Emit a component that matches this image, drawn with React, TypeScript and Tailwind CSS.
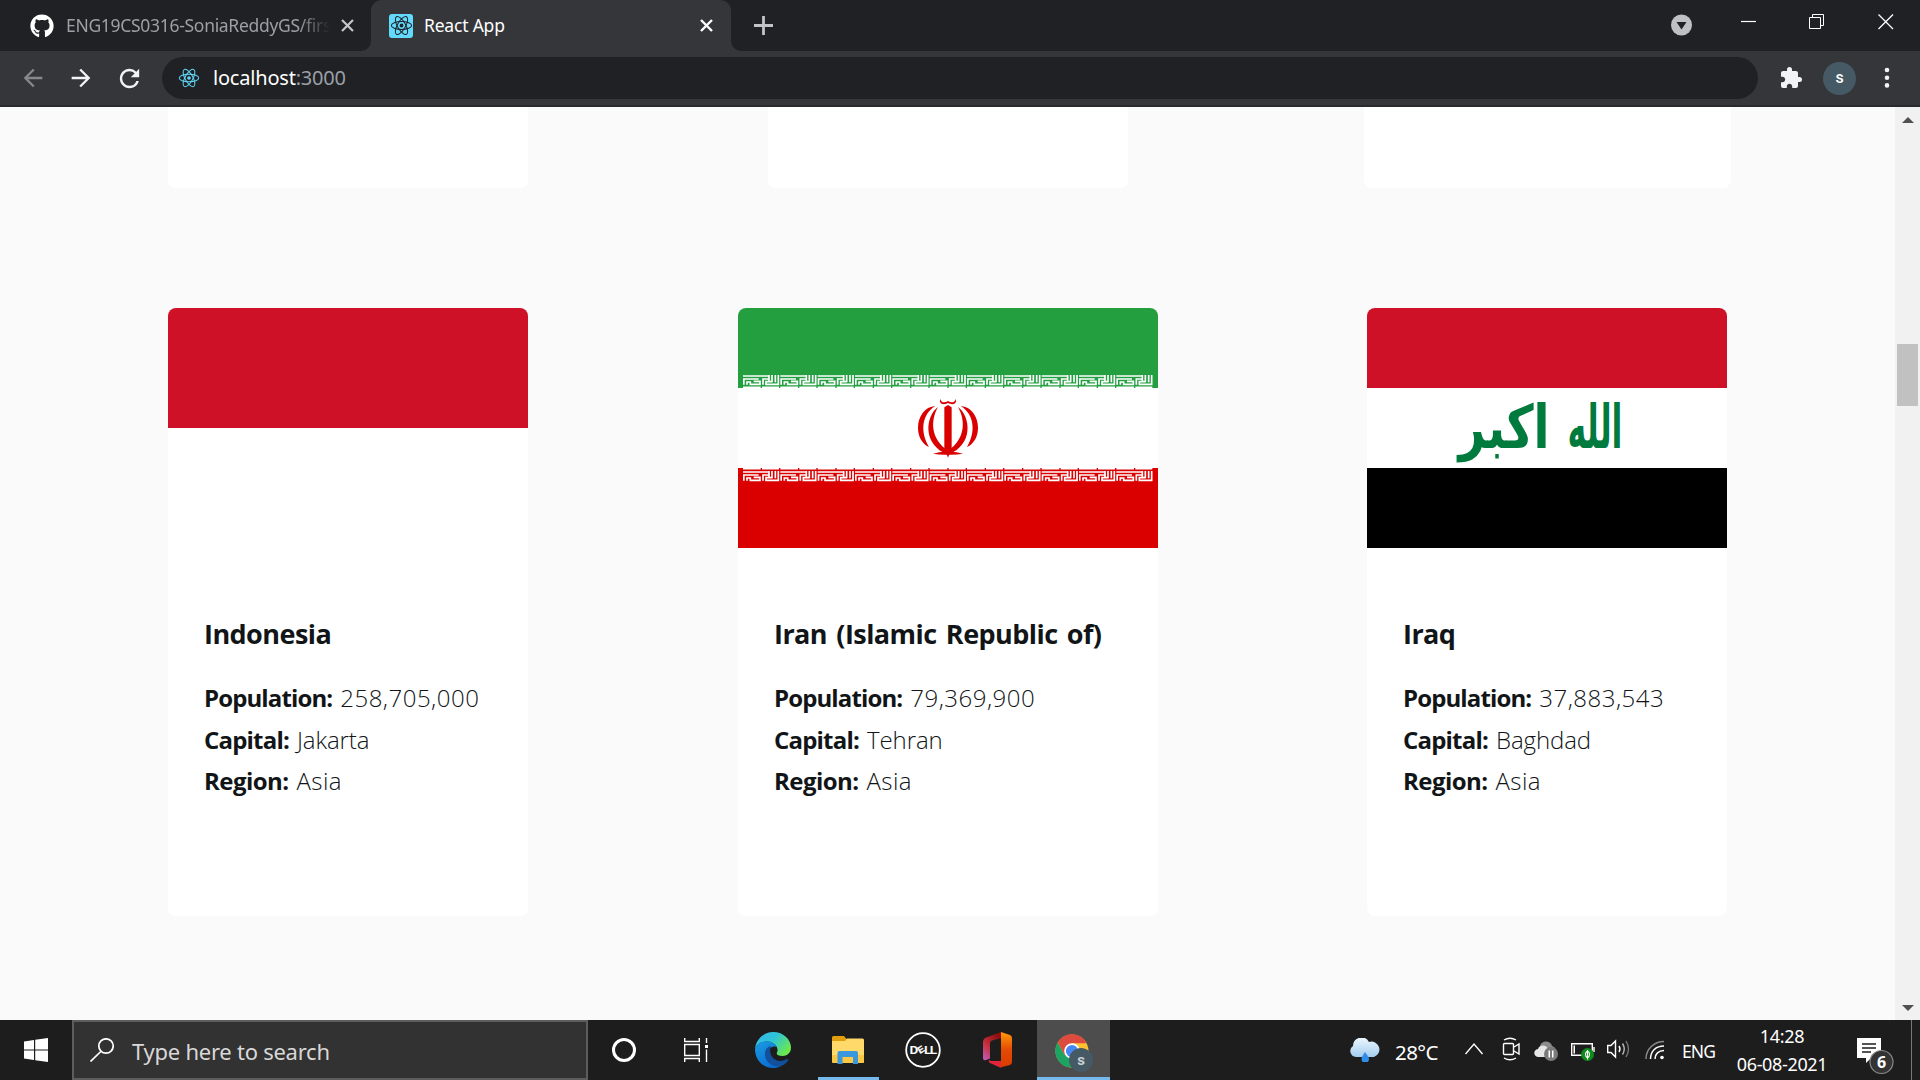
import React from "react";
import { FaGithub } from "react-icons/fa";
import { MdExtension, MdRefresh, MdArrowBack, MdArrowForward } from "react-icons/md";

function ReactLogo({ color, className }: { color: string; className: string }) {
  return (
    <svg viewBox="-12 -12 24 24" className={className} fill="none" stroke={color} strokeWidth="1.1">
      <circle r="2" fill={color} stroke="none" />
      <ellipse rx="10.6" ry="4.2" />
      <ellipse rx="10.6" ry="4.2" transform="rotate(60)" />
      <ellipse rx="10.6" ry="4.2" transform="rotate(120)" />
    </svg>
  );
}

function Cross({ color, size, width }: { color: string; size: number; width: number }) {
  return (
    <svg width={size} height={size} viewBox={`0 0 ${size} ${size}`} stroke={color} strokeWidth={width}>
      <path d={`M1 1L${size - 1} ${size - 1}M${size - 1} 1L1 ${size - 1}`} />
    </svg>
  );
}

function TabStrip() {
  return (
    <div className="flex h-[51px] bg-[#202124]">
      <div className="flex w-[371px] items-center pl-[30px]">
        <FaGithub className="size-6 text-white" />
        <div className="ml-3 w-[264px] whitespace-nowrap text-[17.5px] tracking-[-0.3px] text-[#9aa0a6] [mask-image:linear-gradient(to_right,#000_88%,transparent)]">
          ENG19CS0316-SoniaReddyGS/firs
        </div>
        <div className="ml-[11px]">
          <Cross color="#c4c7ca" size={13} width={2.2} />
        </div>
      </div>
      <div className="relative flex w-[360px] items-center rounded-t-[11px] bg-[#35363a] pl-[18px]">
        <svg className="absolute bottom-0 -left-[10px]" width="10" height="10" fill="#35363a">
          <path d="M10 0V10H0A10 10 0 0 0 10 0Z" />
        </svg>
        <svg className="absolute bottom-0 -right-[10px]" width="10" height="10" fill="#35363a">
          <path d="M0 0V10H10A10 10 0 0 1 0 0Z" />
        </svg>
        <div className="flex size-6 items-center justify-center rounded-[3px] bg-[#61dafb]">
          <ReactLogo color="#20232a" className="size-[23px]" />
        </div>
        <div className="ml-[11px] w-[276px] text-[17.5px] tracking-[-0.2px] text-white">React App</div>
        <Cross color="#fff" size={13} width={2.4} />
      </div>
      <svg className="ml-[23px] mt-4 text-[#c1c4c8]" width="19" height="19" stroke="currentColor" strokeWidth="2.8">
        <path d="M9.5 0V19M0 9.5H19" />
      </svg>
      <div className="ml-auto flex">
        <svg className="mt-[14px]" width="22" height="22">
          <circle cx="10.5" cy="11" r="10.5" fill="#bdc1c6" />
          <path d="M5.500 8H15.500L10.500 15.500Z" fill="#202124" />
        </svg>
        <svg className="ml-[48px] mt-[14px]" width="16" height="16" stroke="#fff" strokeWidth="1.2">
          <path d="M0 7.5H15" />
        </svg>
        <svg className="ml-[52px] mt-[14px]" width="16" height="16" stroke="#fff" strokeWidth="1" fill="none">
          <path d="M.5 3.500H11.500V14.500H.5ZM3.500 3.500V.5H14.500V11.500H11.500" />
        </svg>
        <svg className="ml-[53px] mr-[26px] mt-[14px]" width="16" height="16" stroke="#fff" strokeWidth="1.3">
          <path d="M.5 .5L15 15M15 .5L.5 15" />
        </svg>
      </div>
    </div>
  );
}

function Toolbar() {
  return (
    <div className="flex h-14 items-center border-b-2 border-[#292a2d] bg-[#35363a] pl-[19px]">
      <MdArrowBack className="size-[28px] text-[#86888a]" />
      <MdArrowForward className="ml-5 size-[28px] text-[#f1f3f4]" />
      <MdRefresh className="ml-5 size-[29px] text-[#f1f3f4]" />
      <div className="ml-[18px] flex h-[42px] w-[1596px] items-center rounded-full bg-[#202124] pl-4">
        <ReactLogo color="#61dafb" className="size-[22px]" />
        <div className="ml-[13px] text-[20px] tracking-[-0.2px] text-[#9aa0a6]">
          <span className="text-white">localhost</span>:3000
        </div>
      </div>
      <MdExtension className="ml-[21px] size-6 text-[#f1f3f4]" />
      <div className="ml-5 flex size-[33px] items-center justify-center rounded-full bg-[#455a64] font-['Roboto'] text-[16px] font-medium text-white">
        s
      </div>
      <svg className="ml-[27px]" width="8" height="22" fill="#f1f3f4">
        <circle cx="4" cy="3" r="2.3" />
        <circle cx="4" cy="10.7" r="2.3" />
        <circle cx="4" cy="18.4" r="2.3" />
      </svg>
    </div>
  );
}

function IndonesiaFlag() {
  return (
    <div className="h-60">
      <div className="h-30 bg-[#ce1126]" />
    </div>
  );
}

const tiles = [0, 1, 2, 3, 4, 5, 6, 7, 8, 9, 10];

function KuficBand({ y, edgeY }: { y: number; edgeY: number }) {
  return (
    <g fill="none" stroke="#fff" strokeWidth="5">
      {tiles.map((i) => (
        <g key={i} transform={`translate(${15 + i * 112} 0)`}>
          <path d={`M0 ${edgeY}H53M57 ${edgeY}H108`} />
          <path
            transform={`translate(0 ${y})`}
            d="M0 3H76M2.500 29V12H47M12 29V21H22V28H51V19H32M60 29V12H78V20H69V28H106V0M78 12V0M87 0V22M97 0V22M78 20H88"
          />
        </g>
      ))}
    </g>
  );
}

function IranFlag() {
  return (
    <svg viewBox="0 0 1260 720" className="h-60 w-full">
      <path fill="#239f40" d="M0 0H1260V240H0Z" />
      <path fill="#fff" d="M0 240H1260V480H0Z" />
      <path fill="#da0000" d="M0 480H1260V720H0Z" />
      <g transform="translate(0 201)">
        <KuficBand y={0} edgeY={37} />
      </g>
      <g transform="translate(0 480)">
        <KuficBand y={9} edgeY={2} />
      </g>
      <g fill="#da0000">
        <path d="M630 291L641 298V420L630 449L619 420V298Z" />
        <path d="M607 273C609 284 620 286 630 279C640 286 651 284 653 273C658 284 648 294 630 285C612 294 602 284 607 273Z" />
        {["", "matrix(-1 0 0 1 1260 0)"].map((t) => (
          <g key={t} transform={t || undefined}>
            <path d="M592 294C560 296 540 326 540 359C540 386 552 407 573 417C545 370 552 318 592 294Z" />
            <path d="M600 297C562 325 552 410 630 440V428C576 392 578 336 600 297Z" />
            <path d="M585 437Q610 430 630 432V440Q606 441 585 437Z" />
          </g>
        ))}
      </g>
    </svg>
  );
}

function IraqFlag() {
  return (
    <svg viewBox="0 0 360 240" className="h-60 w-full">
      <path fill="#ce1126" d="M0 0H360V80H0Z" />
      <path fill="#fff" d="M0 80H360V160H0Z" />
      <path fill="#000" d="M0 160H360V240H0Z" />
      <g fill="#007a3d" fontFamily="DejaVu Sans" fontWeight="700" textAnchor="middle">
        <text x="228" y="140" fontSize="60" textLength="55" lengthAdjust="spacingAndGlyphs">
          الله
        </text>
        <text x="137" y="140" fontSize="60" textLength="91" lengthAdjust="spacingAndGlyphs">
          اكبر
        </text>
      </g>
    </svg>
  );
}

type Country = {
  name: string;
  population: string;
  capital: string;
  region: string;
  width: string;
  flag: React.ReactNode;
};

const countries: Country[] = [
  { name: "Indonesia", population: "258,705,000", capital: "Jakarta", region: "Asia", width: "w-[360px]", flag: <IndonesiaFlag /> },
  { name: "Iran (Islamic Republic of)", population: "79,369,900", capital: "Tehran", region: "Asia", width: "w-[420px]", flag: <IranFlag /> },
  { name: "Iraq", population: "37,883,543", capital: "Baghdad", region: "Asia", width: "w-[360px]", flag: <IraqFlag /> },
];

function Fact({ label, value, labelTracking, valueTracking }: { label: string; value: string; labelTracking: string; valueTracking: string }) {
  return (
    <div className="h-[41.5px] whitespace-nowrap text-[24px] leading-[41.5px]">
      <span className={`font-bold ${labelTracking}`}>{label}:</span>
      <span className={`ml-2 font-light ${valueTracking}`}>{value}</span>
    </div>
  );
}

function CountryCard({ c }: { c: Country }) {
  return (
    <article className={`h-[608px] overflow-hidden rounded-lg bg-white ${c.width}`}>
      {c.flag}
      <div className="pl-9 pt-[65px] font-['Open_Sans',sans-serif] text-[#111517]">
        <h3 className="whitespace-nowrap text-[27px] font-bold leading-[42px] tracking-[-0.55px] [word-spacing:2.8px]">{c.name}</h3>
        <div className="mt-[22px]">
          <Fact label="Population" value={c.population} labelTracking="tracking-[-0.88px]" valueTracking="tracking-[0.5px]" />
          <Fact label="Capital" value={c.capital} labelTracking="tracking-[-0.8px]" valueTracking="tracking-[-0.1px]" />
          <Fact label="Region" value={c.region} labelTracking="tracking-[-0.55px]" valueTracking="tracking-[0.4px]" />
        </div>
      </div>
    </article>
  );
}

function Page() {
  return (
    <div className="flex h-[913px] bg-[#fafafa]">
      <main className="w-[1895px] overflow-hidden pl-12">
        <div className="grid grid-cols-[600px_600px_598px] justify-items-center">
          <div className="h-[81px] w-[360px] rounded-b-lg bg-white" />
          <div className="h-[81px] w-[360px] rounded-b-lg bg-white" />
          <div className="h-[81px] w-[367px] rounded-b-lg bg-white" />
        </div>
        <div className="mt-[120px] grid grid-cols-[600px_600px_598px] justify-items-center">
          {countries.map((c) => (
            <CountryCard key={c.name} c={c} />
          ))}
        </div>
      </main>
      <div className="flex w-[25px] flex-col items-center bg-[#f1f1f1]">
        <svg className="mt-[10px]" width="12" height="6" fill="#505050">
          <path d="M0 6L6 0L12 6Z" />
        </svg>
        <div className="mt-[221px] h-[62px] w-[21px] bg-[#c1c1c1]" />
        <svg className="mt-auto mb-[9px]" width="12" height="6" fill="#505050">
          <path d="M0 0L6 6L12 0Z" />
        </svg>
      </div>
    </div>
  );
}

function EdgeIcon() {
  return (
    <svg width="36" height="36" viewBox="0 0 36 36">
      <defs>
        <linearGradient id="eg1" x1="0" y1="0" x2="1" y2=".6">
          <stop offset="0" stopColor="#35b8f0" />
          <stop offset=".5" stopColor="#2fc3d8" />
          <stop offset="1" stopColor="#6be84f" />
        </linearGradient>
        <linearGradient id="eg2" x1="0" y1="0" x2=".6" y2="1">
          <stop offset="0" stopColor="#1b9de2" />
          <stop offset="1" stopColor="#0a6cd0" />
        </linearGradient>
      </defs>
      <path fill="url(#eg1)" d="M0 17C1 7 9 0 18 0C29 0 36 8 36 15.500C36 21 32 24 27.500 24C23 24 21 22.500 22 20.500C24 17 21 10 12 9.500C6 9.300 2 12 0 17Z" />
      <path fill="url(#eg2)" d="M0 17C2 11.500 7 9 12 9.200C17 9.500 21 12 22 15C17 13 13 17 13 22C13 28 18 35 26 34C23 35.500 21 36 18 36C7 36 0 27 0 17Z" />
      <path fill="#124f9c" d="M10 22C10 17 13 14.500 16 14C14 18 15 28 25 29C29 29 31 27 32.500 27C33.500 27 33.500 28 33 28.500C31 31.500 28 34 24 34.500C16 35 10 29 10 22Z" />
    </svg>
  );
}

function ExplorerIcon() {
  return (
    <svg width="32" height="28" viewBox="0 0 32 28">
      <path fill="#e19f10" d="M0 1.500Q0 0 1.500 0H12L14.500 3H20V7H0Z" />
      <path fill="#ffd969" d="M0 5H13L15 2.500H30.500Q32 2.500 32 4V25.500Q32 27 30.500 27H1.500Q0 27 0 25.500Z" />
      <path fill="#fbc843" d="M0 19H32V25.500Q32 27 30.500 27H1.500Q0 27 0 25.500Z" />
      <path fill="#3a96dd" d="M5.500 28V17Q5.500 15 7.500 15H24Q26 15 26 17V28H21V21H10.500V28Z" />
    </svg>
  );
}

function OfficeIcon() {
  return (
    <svg width="29" height="36" viewBox="0 0 29 36">
      <defs>
        <linearGradient id="og1" x1=".6" y1="0" x2="0" y2="1">
          <stop offset="0" stopColor="#8e0f0f" />
          <stop offset=".5" stopColor="#c5303d" />
          <stop offset="1" stopColor="#c05fc4" />
        </linearGradient>
        <linearGradient id="og2" x1="0" y1="0" x2="0" y2="1">
          <stop offset="0" stopColor="#ff9a08" />
          <stop offset=".5" stopColor="#e44a04" />
          <stop offset="1" stopColor="#d83b01" />
        </linearGradient>
      </defs>
      <path fill="url(#og1)" d="M18 0L3 5.500Q0 7 0 10V26Q0 29 3 28L7 26.500V11Q7 9 9 8.500L18 6Z" />
      <path fill="#e3243b" d="M6 28Q5 30 7 31L17 35.500L19 35V29H8Z" />
      <path fill="url(#og2)" d="M18 0L27 3Q29 4 29 6V30Q29 32 27 33L17 35.500Q18 34 18 32Z" />
    </svg>
  );
}

function ChromeIcon() {
  return (
    <svg width="40" height="42" viewBox="0 0 40 42">
      <circle cx="18" cy="18" r="16.500" fill="#fbc233" />
      <path fill="#dd4b3e" d="M3.700 9.500A16.500 16.500 0 0 1 32.600 10.200H18L10.500 22Z" />
      <path fill="#1da462" d="M3.700 9.500A16.500 16.500 0 0 0 18 34.500L26 22H10.500Z" />
      <circle cx="18" cy="18" r="7.800" fill="#fff" />
      <circle cx="18" cy="18" r="6.100" fill="#4587f3" />
      <circle cx="27" cy="27" r="12" fill="#455a64" />
      <text x="27" y="32" textAnchor="middle" fontFamily="Roboto" fontWeight="700" fontSize="15" fill="#c9d0d3">
        s
      </text>
    </svg>
  );
}

function Tray() {
  return (
    <svg width="200" height="30" viewBox="1465 1036 200 30" fill="none" stroke="#fff" strokeWidth="1.4">
      <path d="M1465.500 1055L1474 1045L1482.500 1055" />
      <rect x="1503.500" y="1044.500" width="10" height="11" rx="1" />
      <path d="M1514 1048L1519 1045V1055L1514 1052M1504 1041Q1510 1037.500 1516 1041M1504 1059Q1510 1062.500 1516 1059" />
      <g stroke="none">
        <path fill="#8c8c8c" d="M1540 1047C1541 1041 1551 1041 1552 1047C1557 1048 1557 1056 1552 1057H1545Z" />
        <path fill="#e6e6e6" d="M1538 1058C1533 1057 1533 1051 1538 1050C1540 1045 1547 1046 1548 1050L1553 1052V1058Z" />
        <circle cx="1551" cy="1055" r="7" fill="#7a7a7a" />
        <path fill="#fff" d="M1548.500 1051.500H1550V1058.500H1548.500ZM1552 1051.500H1553.500V1058.500H1552Z" />
      </g>
      <path d="M1571.700 1044.700H1592.300V1056.300H1571.700ZM1594 1048V1053" />
      <path d="M1573.500 1046.500H1575V1054.500H1573.500Z" fill="#fff" stroke="none" />
      <circle cx="1587.500" cy="1055.500" r="6.500" fill="#0f8a1c" stroke="none" />
      <path d="M1587.500 1051V1060.500M1587.500 1052C1584.800 1053 1584.800 1057.500 1587.500 1059C1590.200 1057.500 1590.200 1053 1587.500 1052Z" strokeWidth="1.100" />
      <path d="M1607.700 1046.500H1611L1615.500 1042V1058L1611 1053.500H1607.700ZM1619 1047Q1621 1050 1619 1053" />
      <path d="M1622.500 1044.500Q1626 1050 1622.500 1055.500" stroke="#bbb" />
      <path d="M1626 1042Q1631 1050 1626 1058" stroke="#777" />
      <g strokeWidth="1.500">
        <path d="M1646 1060C1646 1050 1654 1042.500 1664 1042.500" stroke="#8a8a8a" />
        <path d="M1650.500 1060C1650.500 1052 1656 1047 1664 1047" />
        <path d="M1655 1060C1655 1055 1658.500 1051.500 1664 1051.500" />
      </g>
      <circle cx="1662" cy="1058.500" r="1.800" fill="#fff" stroke="none" />
    </svg>
  );
}

function Taskbar() {
  return (
    <div className="flex h-[60px] items-center overflow-hidden bg-[#1d1d1d] text-white">
      <svg className="ml-6" width="24" height="24" fill="#fff">
        <path d="M0 3.500L10 2V11.400H0ZM11.200 1.800L24 0V11.400H11.200ZM0 12.600H10V22L0 20.500ZM11.200 12.600H24V24L11.200 22.200Z" />
      </svg>
      <div className="ml-6 flex h-[60px] w-[516px] items-center border-2 border-[#5d5d5d] bg-[#323232] pl-4">
        <svg width="24" height="24" fill="none" stroke="#fff" strokeWidth="1.7">
          <circle cx="16" cy="8" r="7.200" />
          <path d="M10.800 13.500L.5 23.500" />
        </svg>
        <div className="ml-[18px] mt-0.5 text-[22px] tracking-[-0.25px] text-[#d8d8d8]">Type here to search</div>
      </div>
      <div className="ml-6 size-6 rounded-full border-[3px] border-white" />
      <svg className="ml-12" width="25" height="24" fill="none" stroke="#fff" strokeWidth="1.400">
        <path d="M.7 0V3.500H15.300V0M.7 6.500H15.300V17.500H.7ZM.7 24V20.500H15.300V24M22.500 0V5M22.500 11.500V24" />
        <path d="M21 7H24V10H21Z" fill="#fff" stroke="none" />
      </svg>
      <div className="ml-[46px]">
        <EdgeIcon />
      </div>
      <div className="ml-[27px] flex h-[60px] w-[61px] items-center justify-center border-b-[3px] border-t-[3px] border-t-transparent border-b-[#76b9ed] pr-0.5">
        <ExplorerIcon />
      </div>
      <svg className="ml-[26px]" width="36" height="36" viewBox="0 0 36 36">
        <circle cx="18" cy="18" r="16.800" fill="none" stroke="#fff" strokeWidth="1.800" />
        <g fontFamily="Liberation Sans" fontWeight="700" fontSize="11.500" fill="#fff" stroke="#fff" strokeWidth=".2">
          <text x="4.800" y="22">D</text>
          <text x="16.300" y="20.800" textAnchor="middle" transform="rotate(-32 16.300 18)" fontSize="9.500">E</text>
          <text x="19.300" y="22">L</text>
          <text x="25" y="22">L</text>
        </g>
      </svg>
      <div className="ml-[42px]">
        <OfficeIcon />
      </div>
      <div className="ml-[25px] flex h-[60px] w-[73px] justify-center border-b-[3px] border-[#76b9ed] bg-[#4d4d4d] pt-[13px]">
        <ChromeIcon />
      </div>
      <svg className="ml-[239px]" width="31" height="24" viewBox="0 0 31 24">
        <defs>
          <linearGradient id="cl" x1="0" y1="0" x2="0" y2="1">
            <stop offset="0" stopColor="#eef7ff" />
            <stop offset="1" stopColor="#a3cdf0" />
          </linearGradient>
        </defs>
        <path fill="url(#cl)" d="M7 19A6 6 0 0 1 4 8A8.500 8.500 0 0 1 20 4A7.500 7.500 0 0 1 25 19Z" />
        <path fill="#2f8fe8" d="M16 14Q20 19 20 21A3.500 3.500 0 0 1 12.500 21Q12.500 19 16 14Z" />
      </svg>
      <div className="ml-[15px] w-[70px] pt-1 text-[20.5px] tracking-[-0.6px]">28°C</div>
      <Tray />
      <div className="ml-[17px] w-[50px] pt-0.5 text-[17.5px] tracking-[-0.9px]">ENG</div>
      <div className="w-[100px] whitespace-nowrap text-center text-[18px] leading-7 tracking-[-0.35px]">
        <div>14:28</div>
        <div>06-08-2021</div>
      </div>
      <svg className="ml-[25px] mt-1.5" width="38" height="46" viewBox="0 0 38 46">
        <path fill="#fff" d="M0 8H24V28H14L9 33V28H0Z" />
        <path stroke="#1d1d1d" strokeWidth="1.500" d="M5 14H19M5 18H19M5 22H14" />
        <circle cx="24.500" cy="32" r="11.500" fill="#333" stroke="#8a8a8a" strokeWidth="1.200" />
        <text x="24.500" y="38" textAnchor="middle" fontFamily="Noto Sans" fontWeight="700" fontSize="16" fill="#fff">
          6
        </text>
      </svg>
      <div className="ml-[16px] h-[60px] w-px bg-[#777]" />
    </div>
  );
}

export default function App() {
  return (
    <div className="h-[1080px] w-[1920px] overflow-hidden font-['Noto_Sans',sans-serif]">
      <TabStrip />
      <Toolbar />
      <Page />
      <Taskbar />
    </div>
  );
}
